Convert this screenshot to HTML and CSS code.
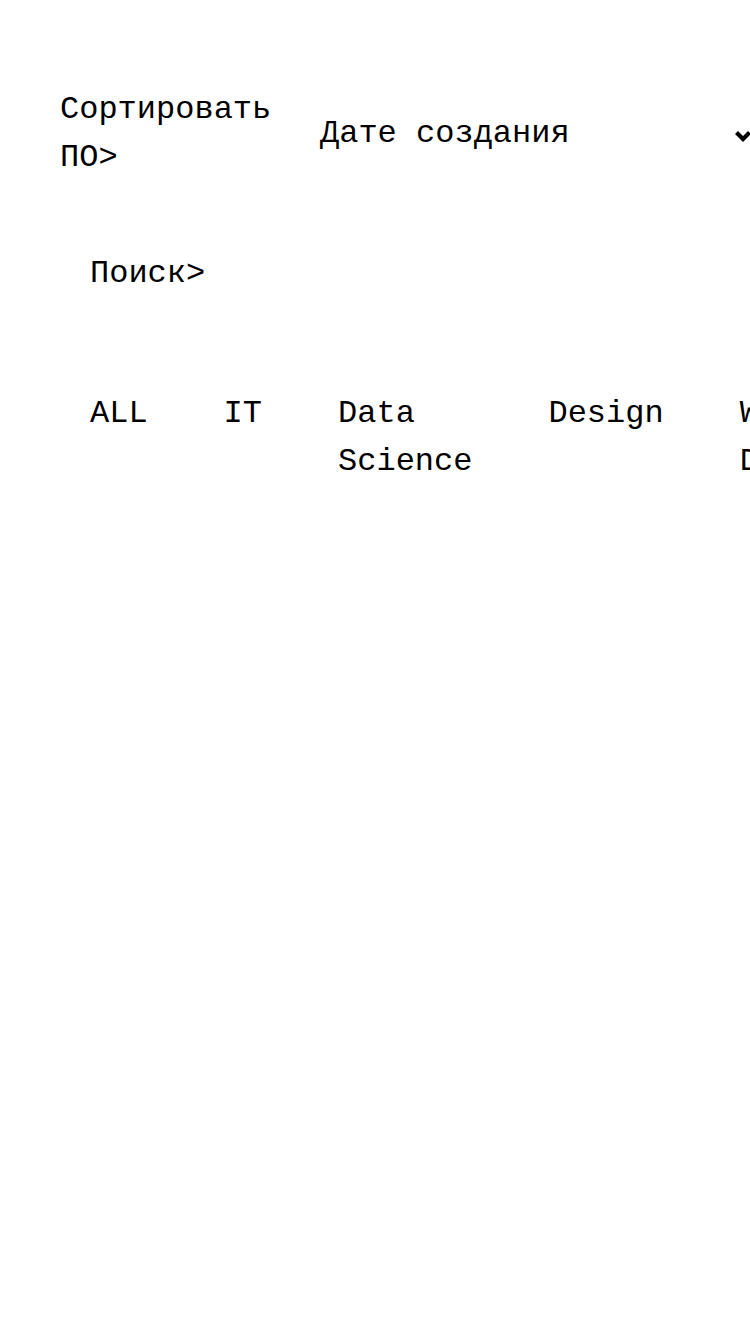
FILE: index.html
```html
<!DOCTYPE html>
<html lang="ru">
<head>
<meta charset="utf-8">
<title>Курсы</title>
<link rel="stylesheet" href="styles.css">
</head>
<body>
<main class="page">
  <div class="sort-row">
    <label class="sort-label" for="sort">Сортировать ПО&gt;</label>
    <div class="select" id="sort">
      <span class="select-value">Дате создания</span>
      <svg class="chevron" width="18" height="13" viewBox="0 0 18 13" aria-hidden="true">
        <path d="M2.5 2.5 L9 9 L15.5 2.5" fill="none" stroke="#000" stroke-width="4.2"/>
      </svg>
    </div>
  </div>
  <div class="search-row">
    <input class="search" type="text" placeholder="Поиск&gt;">
  </div>
  <nav class="tabs">
    <button class="tab">ALL</button>
    <button class="tab">IT</button>
    <button class="tab">Data Science</button>
    <button class="tab">Design</button>
    <button class="tab">Web Development</button>
  </nav>
</main>
</body>
</html>
```
FILE: styles.css
```css
html, body {
  margin: 0;
  padding: 0;
  background: #fff;
  overflow-x: hidden;
}
body {
  font-family: "Liberation Mono", "DejaVu Sans Mono", monospace;
  font-size: 32px;
  line-height: 48px;
  color: #000;
}
.page {
  padding-top: 86px;
}
.sort-row {
  display: flex;
  align-items: center;
  padding-left: 60px;
}
.sort-label {
  flex: none;
  width: 260px;
}
.select {
  flex: none;
  display: flex;
  align-items: center;
  width: 432px;
}
.select-value {
  white-space: nowrap;
}
.chevron {
  margin-left: auto;
  margin-top: 4px;
  display: block;
}
.search-row {
  margin-top: 68px;
  padding-left: 90px;
}
.search {
  display: block;
  width: 500px;
  height: 48px;
  padding: 0;
  margin: 0;
  border: none;
  outline: none;
  background: transparent;
  font: inherit;
  color: #000;
}
.search::placeholder {
  color: #000;
  opacity: 1;
}
.tabs {
  margin-top: 92px;
  display: flex;
  align-items: flex-start;
  gap: 76px;
  padding-left: 90px;
}
.tab {
  margin: 0;
  padding: 0;
  border: none;
  background: none;
  font: inherit;
  line-height: inherit;
  color: #000;
  text-align: left;
  cursor: pointer;
}
```
